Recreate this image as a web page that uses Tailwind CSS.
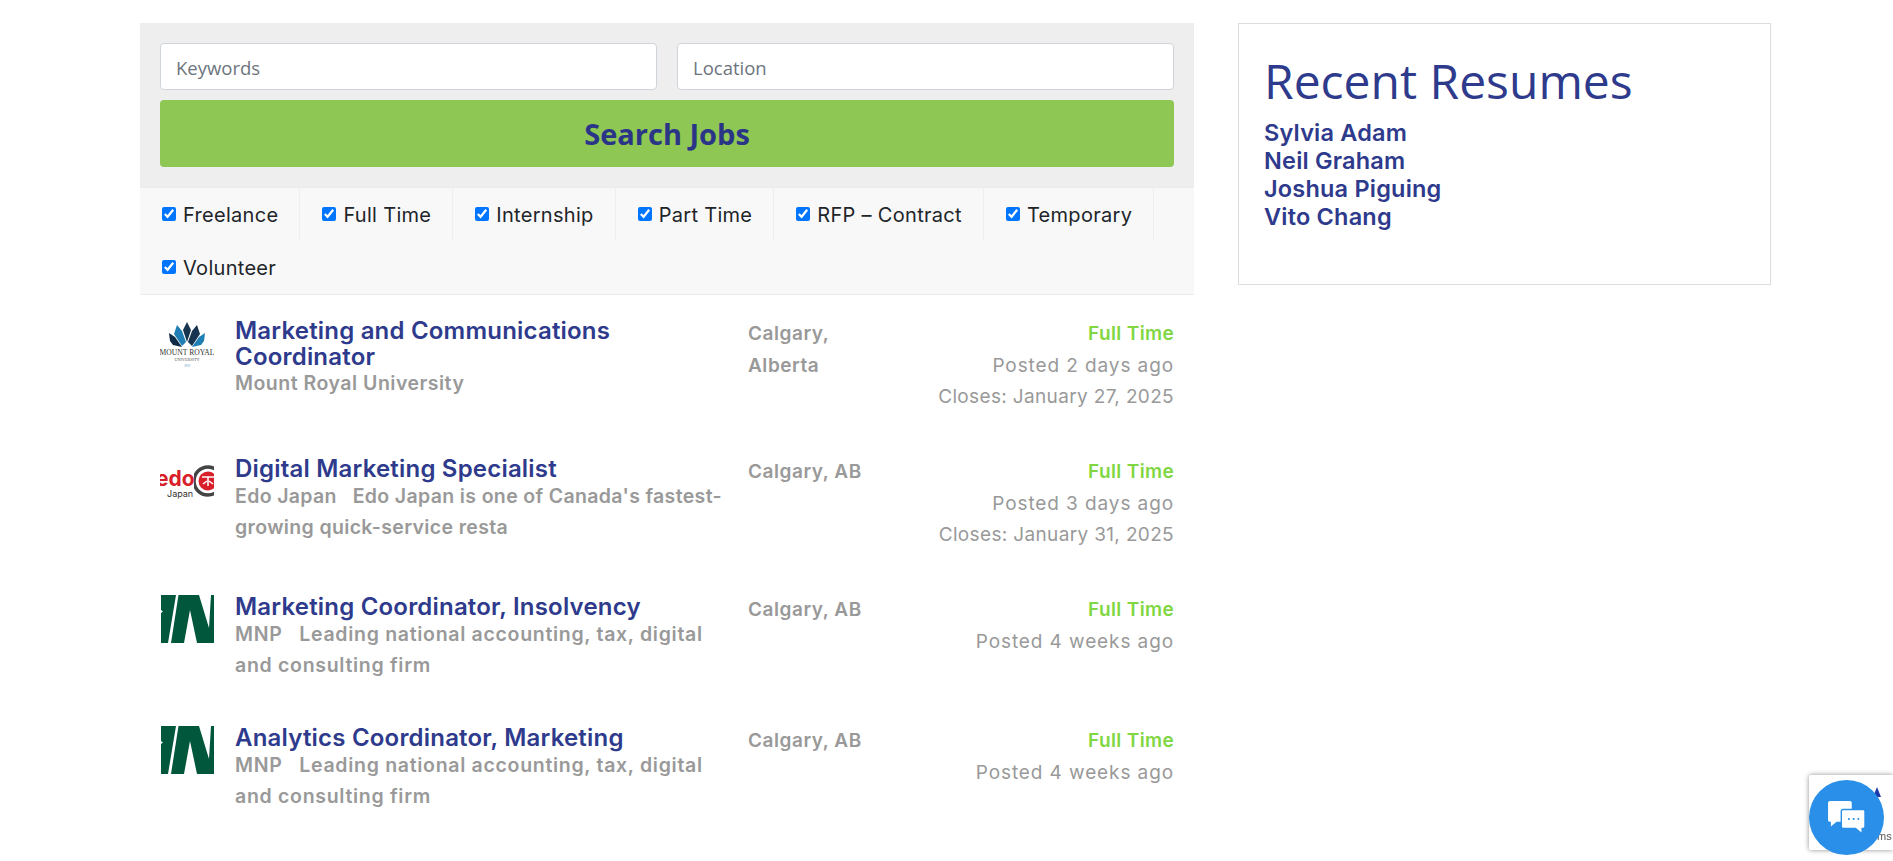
<!DOCTYPE html>
<html lang="en">
<head>
    <meta charset="UTF-8">
    <title>Jobs</title>
    <script src="https://cdn.jsdelivr.net/npm/@tailwindcss/browser@4"></script>
</head>
<body class="bg-white font-['Inter',sans-serif] overflow-hidden h-[861px]">
<div class="flex items-start gap-[44px] pl-[140px] pt-[23px]">
    <!-- left column -->
    <div class="w-[1054px]">
        <form class="bg-[#eeeeee] px-[20px] pt-[20px] pb-[20px]">
            <div class="grid grid-cols-2 gap-[20px]">
                <input type="text" placeholder="Keywords" class="h-[47px] pt-[1px] bg-white border border-[#ced4da] rounded-[4px] px-[15px] text-[18.5px] font-['Open_Sans',sans-serif] placeholder:text-[#6c757d]">
                <input type="text" placeholder="Location" class="h-[47px] pt-[1px] bg-white border border-[#ced4da] rounded-[4px] px-[15px] text-[18.5px] font-['Open_Sans',sans-serif] placeholder:text-[#6c757d]">
            </div>
            <button type="button" class="block w-full h-[67px] mt-[10px] bg-[#8fc754] rounded-[4px] text-[#2a3587] text-[29px] font-bold font-['Open_Sans',sans-serif]">Search Jobs</button>
        </form>

        <ul class="flex flex-wrap bg-[#f8f8f8] border-y border-[#ebebeb] text-[20px] tracking-[0.3px] text-[#212529]">
            <li class="h-[53px] flex items-center gap-[7px] pl-[22px] pr-[21px] border-r border-[#eeeeee]"><input type="checkbox" checked class="w-[14px] h-[14px] accent-[#0075ff] -mt-[2px]">Freelance</li>
            <li class="h-[53px] flex items-center gap-[7px] pl-[22px] pr-[21px] border-r border-[#eeeeee]"><input type="checkbox" checked class="w-[14px] h-[14px] accent-[#0075ff] -mt-[2px]">Full Time</li>
            <li class="h-[53px] flex items-center gap-[7px] pl-[22px] pr-[21px] border-r border-[#eeeeee]"><input type="checkbox" checked class="w-[14px] h-[14px] accent-[#0075ff] -mt-[2px]">Internship</li>
            <li class="h-[53px] flex items-center gap-[7px] pl-[22px] pr-[21px] border-r border-[#eeeeee]"><input type="checkbox" checked class="w-[14px] h-[14px] accent-[#0075ff] -mt-[2px]">Part Time</li>
            <li class="h-[53px] flex items-center gap-[7px] pl-[22px] pr-[21px] border-r border-[#eeeeee]"><input type="checkbox" checked class="w-[14px] h-[14px] accent-[#0075ff] -mt-[2px]">RFP – Contract</li>
            <li class="h-[53px] flex items-center gap-[7px] pl-[22px] pr-[21px] border-r border-[#eeeeee]"><input type="checkbox" checked class="w-[14px] h-[14px] accent-[#0075ff] -mt-[2px]">Temporary</li>
            <li class="h-[53px] flex items-center gap-[7px] pl-[22px] pr-[21px]"><input type="checkbox" checked class="w-[14px] h-[14px] accent-[#0075ff] -mt-[2px]">Volunteer</li>
        </ul>

        <div class="px-[20px] pt-[23px]">
            <!-- Mount Royal -->
            <div class="flex h-[138px]">
                <div class="w-[54px] shrink-0 mr-[21px] pt-[2px]">
                    <svg width="54" height="50" viewBox="0 0 54 50">
                        <path d="M27 2 L23 10 L27 22 L31 10Z" fill="#16344f"/>
                        <path d="M17 5 L14 14 L22 26 L26 22 L22 11Z" fill="#1f7fb5"/>
                        <path d="M37 5 L40 14 L32 26 L28 22 L32 11Z" fill="#16344f"/>
                        <path d="M9 13 L10 21 L13 25 L22 27 L15 17Z" fill="#0f2a44"/>
                        <path d="M45 13 L44 21 L41 25 L32 27 L39 17Z" fill="#1f7fb5"/>
                        <text x="27" y="35" text-anchor="middle" font-family="Liberation Serif" font-size="7.6" fill="#333">MOUNT ROYAL</text>
                        <text x="27" y="41" text-anchor="middle" font-family="Liberation Serif" font-size="4.2" fill="#555">UNIVERSITY</text>
                        <text x="27" y="47" text-anchor="middle" font-family="Liberation Serif" font-size="3" fill="#4a90b8">1910</text>
                    </svg>
                </div>
                <div class="w-[500px] shrink-0 mr-[13px]">
                    <h3 class="text-[24px] tracking-[0.2px] leading-[25.5px] font-semibold text-[#2e3a8c]">Marketing and Communications Coordinator</h3>
                    <p class="text-[19.5px] tracking-[0.5px] leading-[27px] mt-[1px] font-semibold text-[#999999]">Mount Royal University</p>
                </div>
                <div class="w-[120px] text-[19px] tracking-[0.55px] leading-[31.5px] font-semibold text-[#999999]">Calgary, Alberta</div>
                <div class="flex-1 text-right text-[19px] tracking-[0.35px] leading-[31.5px] text-[#999999]">
                    <p class="font-semibold text-[#81d742]">Full Time</p>
                    <p class="tracking-[0.9px]">Posted 2 days ago</p>
                    <p>Closes: January 27, 2025</p>
                </div>
            </div>
            <!-- Edo Japan -->
            <div class="flex h-[138px]">
                <div class="w-[54px] shrink-0 mr-[21px]">
                    <svg width="54" height="44" viewBox="0 0 54 44" class="block">
                        <circle cx="48" cy="25" r="14" fill="none" stroke="#444444" stroke-width="3.5"/>
                        <circle cx="48" cy="25" r="9.5" fill="#d81f2a"/>
                        <path d="M42 21h12M48 21v9M43 28l4-3M53 28l-4-3" stroke="#ffffff" stroke-width="1.5" fill="none"/>
                        <rect x="0" y="10" width="34" height="24" fill="#ffffff"/>
                        <text x="-4" y="30" font-family="Inter" font-weight="700" font-size="21" fill="#d81f2a">edo</text>
                        <text x="7" y="41" font-family="Inter" font-size="9" fill="#333333">Japan</text>
                    </svg>
                </div>
                <div class="w-[500px] shrink-0 mr-[13px]">
                    <h3 class="text-[24px] tracking-[0.2px] leading-[25.5px] font-semibold text-[#2e3a8c]">Digital Marketing Specialist</h3>
                    <p class="text-[19.5px] tracking-[0.35px] leading-[31.5px] -mt-[1px] font-semibold text-[#999999]">Edo Japan &nbsp; Edo Japan is one of Canada's fastest-growing quick-service resta</p>
                </div>
                <div class="w-[120px] text-[19px] tracking-[0.55px] leading-[31.5px] font-semibold text-[#999999]">Calgary, AB</div>
                <div class="flex-1 text-right text-[19px] tracking-[0.35px] leading-[31.5px] text-[#999999]">
                    <p class="font-semibold text-[#81d742]">Full Time</p>
                    <p class="tracking-[0.9px]">Posted 3 days ago</p>
                    <p>Closes: January 31, 2025</p>
                </div>
            </div>
            <!-- MNP -->
            <div class="flex h-[131px]">
                <div class="w-[53px] shrink-0 ml-[1px] mr-[21px] mt-[1px]">
                    <svg width="53" height="49" viewBox="0 0 53 49" class="block">
                        <path d="M0 0H15L7 48H0V18L2 16.5L0 15ZM17.5 0H38L48 33L50 0H53V48H36L29 15L23 48H10Z" fill="#00573c"/>
                    </svg>
                </div>
                <div class="w-[500px] shrink-0 mr-[13px]">
                    <h3 class="text-[24px] tracking-[0.2px] leading-[25.5px] font-semibold text-[#2e3a8c]">Marketing Coordinator, Insolvency</h3>
                    <p class="text-[19.5px] tracking-[0.7px] leading-[31.5px] -mt-[1px] font-semibold text-[#999999]">MNP &nbsp; Leading national accounting, tax, digital and consulting firm</p>
                </div>
                <div class="w-[120px] text-[19px] tracking-[0.55px] leading-[31.5px] font-semibold text-[#999999]">Calgary, AB</div>
                <div class="flex-1 text-right text-[19px] tracking-[0.35px] leading-[31.5px] text-[#999999]">
                    <p class="font-semibold text-[#81d742]">Full Time</p>
                    <p class="tracking-[0.9px]">Posted 4 weeks ago</p>
                </div>
            </div>
            <div class="flex h-[131px]">
                <div class="w-[53px] shrink-0 ml-[1px] mr-[21px] mt-[1px]">
                    <svg width="53" height="49" viewBox="0 0 53 49" class="block">
                        <path d="M0 0H15L7 48H0V18L2 16.5L0 15ZM17.5 0H38L48 33L50 0H53V48H36L29 15L23 48H10Z" fill="#00573c"/>
                    </svg>
                </div>
                <div class="w-[500px] shrink-0 mr-[13px]">
                    <h3 class="text-[24px] tracking-[0.2px] leading-[25.5px] font-semibold text-[#2e3a8c]">Analytics Coordinator, Marketing</h3>
                    <p class="text-[19.5px] tracking-[0.7px] leading-[31.5px] -mt-[1px] font-semibold text-[#999999]">MNP &nbsp; Leading national accounting, tax, digital and consulting firm</p>
                </div>
                <div class="w-[120px] text-[19px] tracking-[0.55px] leading-[31.5px] font-semibold text-[#999999]">Calgary, AB</div>
                <div class="flex-1 text-right text-[19px] tracking-[0.35px] leading-[31.5px] text-[#999999]">
                    <p class="font-semibold text-[#81d742]">Full Time</p>
                    <p class="tracking-[0.9px]">Posted 4 weeks ago</p>
                </div>
            </div>
        </div>
    </div>

    <!-- right column -->
    <aside class="w-[533px] h-[262px] border border-[#dddddd] pl-[25px] pt-[28px]">
        <h2 class="text-[48px] leading-[57px] font-medium text-[#2e3a8c] font-['Open_Sans',sans-serif]">Recent Resumes</h2>
        <ul class="mt-[10px] text-[23.5px] tracking-[0.2px] leading-[28px] font-semibold text-[#2e3a8c]">
            <li>Sylvia Adam</li>
            <li>Neil Graham</li>
            <li>Joshua Piguing</li>
            <li>Vito Chang</li>
        </ul>
    </aside>
</div>

<!-- recaptcha badge + chat launcher -->
<div class="fixed left-[1809px] top-[775px] w-[84px] h-[75px] bg-white rounded-l-[2px] shadow-[0_0_5px_rgba(0,0,0,0.45)] overflow-hidden">
    <div class="absolute left-[64px] top-[12px] w-0 h-0 border-l-[4px] border-r-[4px] border-b-[10px] border-l-transparent border-r-transparent border-b-[#1c3aa9]"></div>
    <span class="absolute left-[68px] top-[54px] text-[11px] leading-[14px] text-[#555555] font-['Liberation_Sans',sans-serif]">ms</span>
</div>
<div class="fixed left-[1809px] top-[780px] w-[75px] h-[75px] rounded-full bg-[#2a8fe8] flex items-center justify-center">
    <svg width="40" height="36" viewBox="0 0 42 38">
        <path d="M3 1H24a2 2 0 0 1 2 2V21a2 2 0 0 1-2 2H10L4 28V23H3a2 2 0 0 1-2-2V3a2 2 0 0 1 2-2Z" fill="#fff"/>
        <path d="M17 10H38a2 2 0 0 1 2 2V28a2 2 0 0 1-2 2H37V36L30 30H17a2 2 0 0 1-2-2V12a2 2 0 0 1 2-2Z" fill="#fff" stroke="#2a8fe8" stroke-width="1.5"/>
        <circle cx="23" cy="20" r="1.1" fill="#2a8fe8"/><circle cx="28" cy="20" r="1.1" fill="#2a8fe8"/><circle cx="33" cy="20" r="1.1" fill="#2a8fe8"/>
    </svg>
</div>
</body>
</html>
